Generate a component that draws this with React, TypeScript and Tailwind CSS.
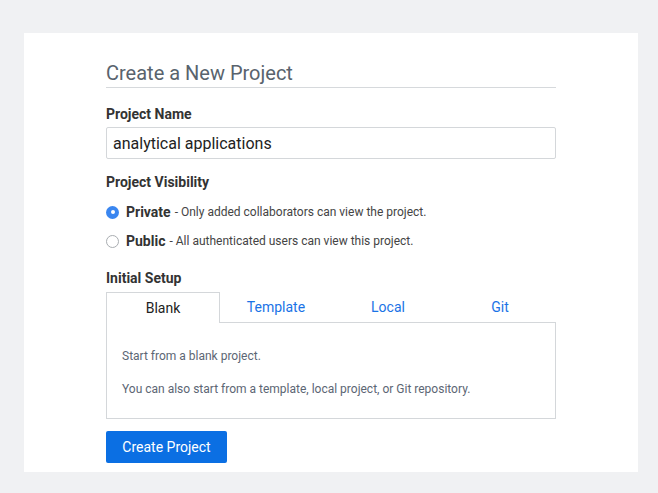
import React, { useState } from "react";

const tabs = ["Blank", "Template", "Local", "Git"];

export default function App() {
    const [tab, setTab] = useState("Blank");
    const [visibility, setVisibility] = useState("private");
    const [name, setName] = useState("analytical applications");

    return (
        <div className="min-h-[493px] bg-[#f0f1f3] pt-[33px] pl-[24px] pr-[20px] pb-[21px]" style={{ fontFamily: "Roboto, 'Liberation Sans', sans-serif" }}>
            <div className="bg-white h-[439px] pl-[82px] pt-[28px]">
                <div className="w-[450px] flex flex-col">
                    <h1 className="text-[20px] leading-[24px] text-[#59636d] pb-[2px] border-b border-[#d6d9dc]">Create a New Project</h1>

                    <label className="mt-[17px] text-[14px] leading-[18px] font-bold text-[#333]">Project Name</label>
                    <input
                        type="text"
                        value={name}
                        onChange={(e) => setName(e.target.value)}
                        className="mt-[4px] h-[32px] border border-[#d4d7da] rounded-[2px] px-[6px] text-[16px] text-[#222] outline-none"
                    />

                    <div className="mt-[14px] text-[14px] leading-[18px] font-bold text-[#333]">Project Visibility</div>
                    <div className="mt-[11px] flex flex-col gap-[9px]">
                        {[
                            { id: "private", label: "Private", desc: "Only added collaborators can view the project." },
                            { id: "public", label: "Public", desc: "All authenticated users can view this project." },
                        ].map((o) => (
                            <label key={o.id} className="h-[20px] flex items-center cursor-pointer" onClick={() => setVisibility(o.id)}>
                                {visibility === o.id ? (
                                    <span className="w-[13px] h-[13px] rounded-full bg-[#3a86f0] flex items-center justify-center">
                                        <span className="w-[4px] h-[4px] rounded-full bg-white" />
                                    </span>
                                ) : (
                                    <span className="w-[13px] h-[13px] rounded-full border border-[#a9adb1] bg-white" />
                                )}
                                <span className="ml-[7px] text-[14px] font-bold text-[#333]">{o.label}</span>
                                <span className="ml-[4px] text-[12px] text-[#444]">- {o.desc}</span>
                            </label>
                        ))}
                    </div>

                    <div className="mt-[18px] text-[14px] leading-[18px] font-bold text-[#333]">Initial Setup</div>
                    <div className="mt-[5px] flex">
                        {tabs.map((t) =>
                            t === tab ? (
                                <button key={t} onClick={() => setTab(t)} className="flex-1 h-[31px] border border-b-0 border-[#d4d7da] bg-white text-[14px] text-[#222]">
                                    {t}
                                </button>
                            ) : (
                                <button key={t} onClick={() => setTab(t)} className="flex-1 h-[31px] border-b border-[#d4d7da] text-[14px] text-[#1a73e6]">
                                    {t}
                                </button>
                            )
                        )}
                    </div>
                    <div className="h-[96px] border border-t-0 border-[#d4d7da] pl-[15px] pt-[24px] text-[12px] leading-[18px] text-[#5c6674]">
                        <p>Start from a blank project.</p>
                        <p className="mt-[15px]">You can also start from a template, local project, or Git repository.</p>
                    </div>

                    <button className="mt-[12px] w-[121px] h-[32px] rounded-[2px] bg-[#0b6fe3] text-white text-[14px]">Create Project</button>
                </div>
            </div>
        </div>
    );
}
